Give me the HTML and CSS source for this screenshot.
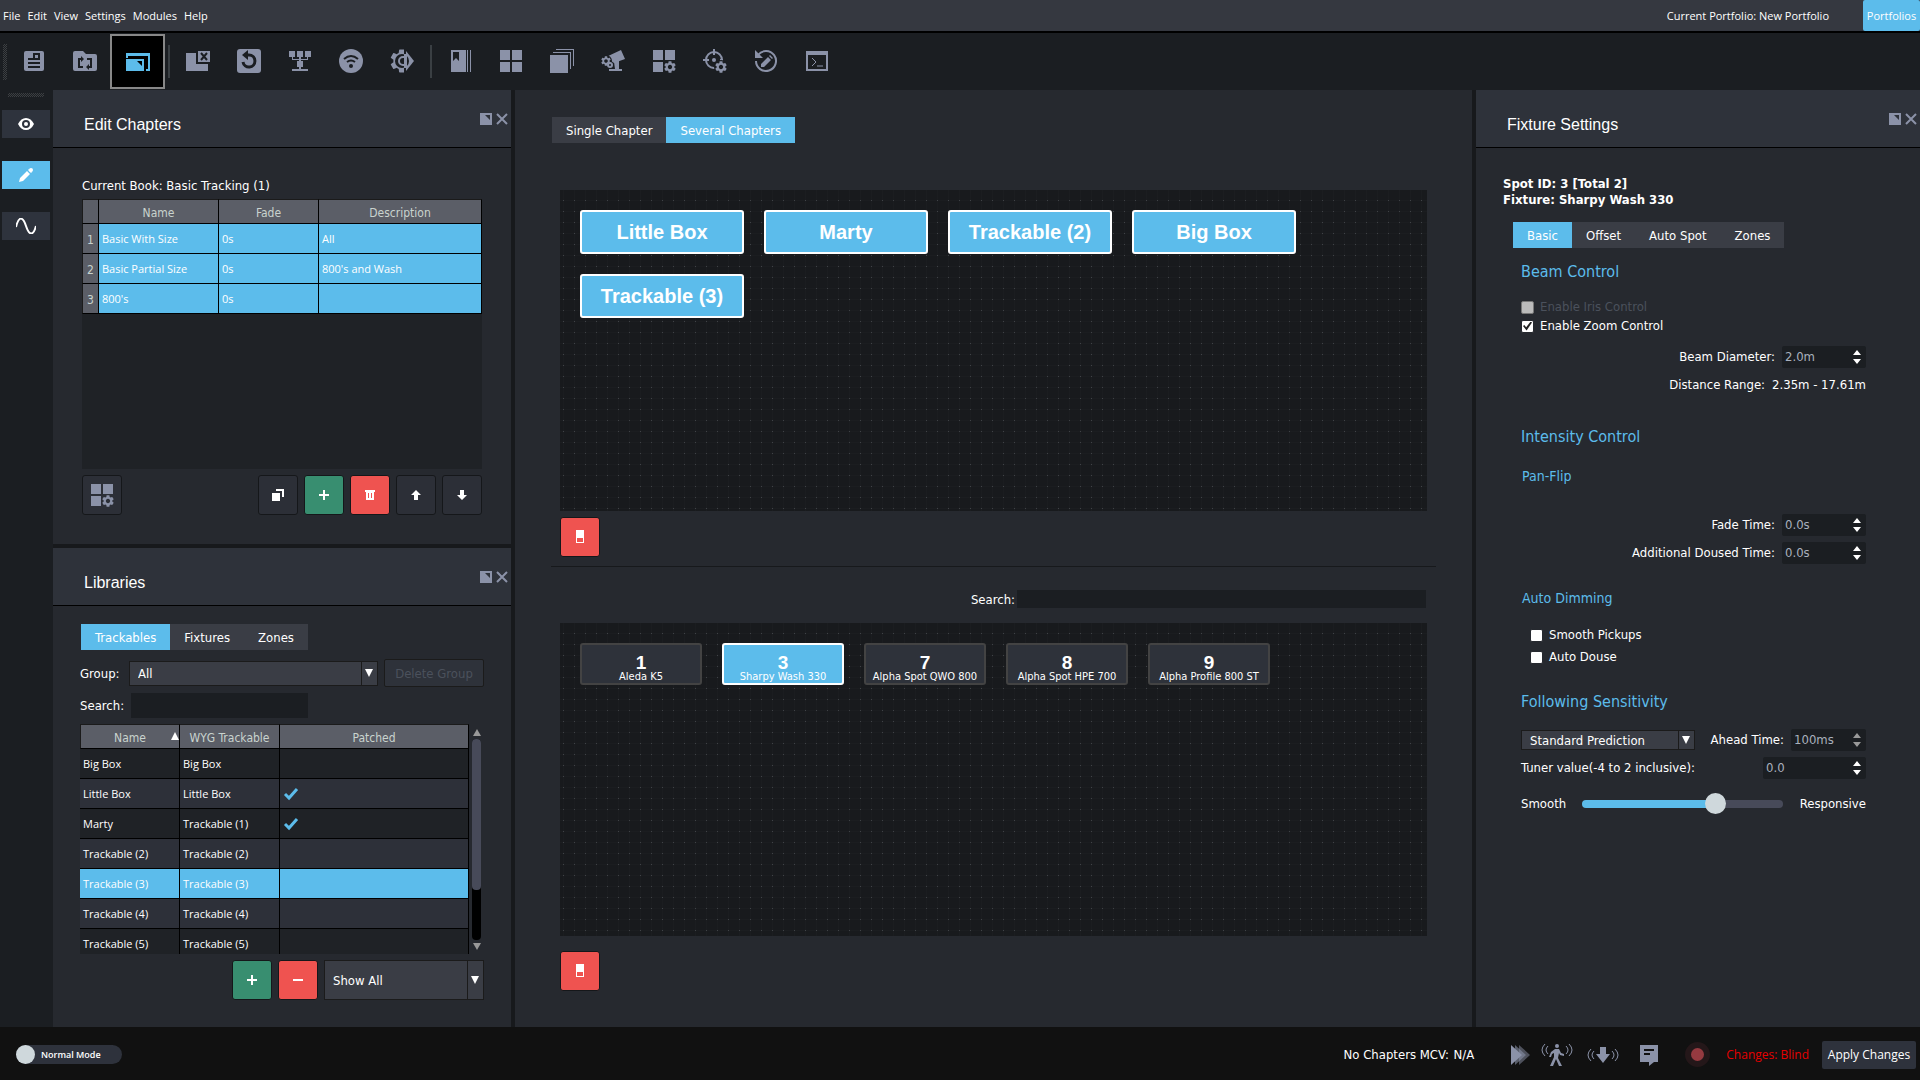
FILE: index.html
```html
<!DOCTYPE html>
<html lang="en">
<head>
    <meta charset="UTF-8">
    <meta name="viewport" content="width=device-width, initial-scale=1.0">
    <title>New Portfolio - Edit Chapters</title>
    <link rel="stylesheet" href="styles.css">
</head>
<body>
    <!-- Shared icons -->
    <svg class="sprite" aria-hidden="true">
        <symbol id="gear" viewBox="2 2 20 20">
            <path d="M19.14 12.94c.04-.3.06-.61.06-.94 0-.32-.02-.64-.07-.94l2.03-1.58c.18-.14.23-.41.12-.61l-1.92-3.32c-.12-.22-.37-.29-.59-.22l-2.39.96c-.5-.38-1.03-.7-1.62-.94l-.36-2.54c-.04-.24-.24-.41-.48-.41h-3.84c-.24 0-.43.17-.47.41l-.36 2.54c-.59.24-1.13.57-1.62.94l-2.39-.96c-.22-.08-.47 0-.59.22L2.74 8.87c-.12.21-.08.47.12.61l2.03 1.58c-.05.3-.09.63-.09.94s.02.64.07.94l-2.03 1.58c-.18.14-.23.41-.12.61l1.92 3.32c.12.22.37.29.59.22l2.39-.96c.5.38 1.03.7 1.62.94l.36 2.54c.05.24.24.41.48.41h3.84c.24 0 .44-.17.47-.41l.36-2.54c.59-.24 1.13-.56 1.62-.94l2.39.96c.22.08.47 0 .59-.22l1.92-3.32c.12-.22.07-.47-.12-.61l-2.01-1.58zM12 15.6c-1.98 0-3.6-1.62-3.6-3.6s1.62-3.6 3.6-3.6 3.6 1.62 3.6 3.6-1.62 3.6-3.6 3.6z"/>
        </symbol>
        <symbol id="grid-gear" viewBox="0 0 24 24">
            <path d="M1 1h10v10H1zM13 1h10v10H13zM1 13h10v10H1z"/>
            <use href="#gear" x="12" y="12" width="12" height="12"/>
        </symbol>
        <symbol id="dock" viewBox="0 0 12 12">
            <path fill-rule="evenodd" d="M0 0h12v12H0zM5 2h5v5z"/>
        </symbol>
        <symbol id="close" viewBox="0 0 12 12">
            <path d="M1 1l10 10M11 1L1 11" fill="none" stroke="currentColor" stroke-width="2"/>
        </symbol>
        <symbol id="plus" viewBox="0 0 12 12">
            <path d="M5 1h2v4h4v2H7v4H5V7H1V5h4z"/>
        </symbol>
        <symbol id="check" viewBox="0 0 16 14">
            <path d="M2 7l4 4 8-9" fill="none" stroke="currentColor" stroke-width="3"/>
        </symbol>
        <symbol id="eraser" viewBox="0 0 10 14">
            <path fill-rule="evenodd" d="M1 0h8v13H1zM2 8h6v4H2z"/>
        </symbol>
        <symbol id="spin" viewBox="0 0 8 16">
            <path d="M0 6l4-5 4 5zM0 10h8l-4 5z"/>
        </symbol>
    </svg>

    <header class="menubar">
        <nav class="menu">
            <a href="#">File</a>
            <a href="#">Edit</a>
            <a href="#">View</a>
            <a href="#">Settings</a>
            <a href="#">Modules</a>
            <a href="#">Help</a>
        </nav>
        <span class="current-portfolio">Current Portfolio: New Portfolio</span>
        <button class="portfolios-btn">Portfolios</button>
    </header>

    <div class="toolbar">
        <span class="grip grip-v"></span>
        <button class="tool" aria-label="Portfolio">
            <svg viewBox="0 0 24 24"><rect x="2" y="2" width="20" height="20" rx="2"/><path class="cut" d="M11 4h7v7h-7zM6 9h5v2H6zM6 13h12v2H6zM6 17h12v2H6z"/><path d="M13 6h3v3h-3z"/></svg>
        </button>
        <button class="tool" aria-label="Reload folder">
            <svg viewBox="0 0 24 24"><path d="M2 2h8l3 3h9a2 2 0 0 1 2 2v13a2 2 0 0 1-2 2H2a2 2 0 0 1-2-2V4a2 2 0 0 1 2-2z"/><path class="cut-line" d="M10 18H6v-8h3M14 10h4v8h-3"/><path class="cut" d="M8 7l3 3-3 3zM16 15l-3 3 3 3z"/></svg>
        </button>
        <button class="tool active" aria-label="Windows">
            <svg viewBox="0 0 24 24"><path d="M0 4h24v18h-4v-2h2V7H2v2H0z"/><path fill-rule="evenodd" d="M0 10h18v12H0zM11 12h5v5z"/></svg>
        </button>
        <span class="divider"></span>
        <button class="tool" aria-label="Close windows">
            <svg viewBox="0 0 24 24"><path d="M0 4h10v11h12v7H0zM12 2h12v11H12z"/><path class="cut-line" d="M15 4l6 7M21 4l-6 7"/></svg>
        </button>
        <button class="tool" aria-label="Reset">
            <svg viewBox="0 0 24 24"><rect width="24" height="24" rx="3"/><path class="cut-line thick" d="M9 6h3a6 6 0 1 1-6 7"/><path class="cut" d="M5 6l6-5v10z"/></svg>
        </button>
        <button class="tool" aria-label="Network">
            <svg viewBox="0 0 24 24"><path d="M1 2h6v6H1zM9 2h6v6H9zM17 2h6v6h-6zM9 12h6v6H9zM11 8h2v13h-2zM4 8h1v2h14V8h1v3H4zM4 20h16v2H4z"/></svg>
        </button>
        <button class="tool" aria-label="Wireless">
            <svg viewBox="0 0 24 24"><circle cx="12" cy="12" r="12"/><path class="cut-line" d="M5 10q7-6 14 0M8 13q4-3 8 0"/><circle class="cut" cx="12" cy="17" r="2"/></svg>
        </button>
        <button class="tool" aria-label="Run setup">
            <svg viewBox="0 0 24 24"><use href="#gear" width="24" height="24"/><path class="cut" d="M14 0h10v24H14z"/><path d="M16 2l8 10-8 10z"/><circle class="cut" cx="12" cy="12" r="7"/><path d="M14 5h3v14h-3z"/><path class="line" d="M15 8h-2a4 4 0 0 0 0 8h2"/></svg>
        </button>
        <span class="divider"></span>
        <button class="tool" aria-label="Book">
            <svg viewBox="0 0 24 24"><path fill-rule="evenodd" d="M3 1h15v22H3zM5 3v9l3-3 3 3V3z"/><path d="M19 1h1v22h-1zM22 1h1v22h-1z"/></svg>
        </button>
        <button class="tool" aria-label="Library">
            <svg viewBox="0 0 24 24"><path d="M1 1h10v10H1zM13 1h10v10H13zM1 13h10v10H1zM13 13h10v10H13z"/></svg>
        </button>
        <button class="tool" aria-label="Layers">
            <svg viewBox="0 0 24 24"><path d="M0 6h18v18H0zM3 3h18v17h-1V4H3zM6 0h18v17h-1V1H6z"/></svg>
        </button>
        <button class="tool" aria-label="Fixtures">
            <svg viewBox="0 0 24 24"><path d="M5 8L20 1l4 9-11 4zM13 13l5-2v9h3v2H8v-2h6z"/><circle class="cut" cx="5" cy="12" r="6"/><use href="#gear" x="0" y="7" width="10" height="10"/><circle cx="9" cy="16" r="3"/><circle class="cut" cx="9" cy="16" r="1"/></svg>
        </button>
        <button class="tool" aria-label="Library settings">
            <svg><use href="#grid-gear"/></svg>
        </button>
        <button class="tool" aria-label="Calibration">
            <svg viewBox="0 0 24 24"><circle class="line" cx="11" cy="11" r="8"/><path class="line" d="M11 0v6M0 11h6M17 11h3"/><circle cx="11" cy="11" r="2"/><circle class="cut" cx="18" cy="18" r="7"/><use href="#gear" x="12" y="12" width="12" height="12"/></svg>
        </button>
        <button class="tool" aria-label="Edit history">
            <svg viewBox="0 0 24 24"><path class="line" d="M4 6a10 10 0 1 1-2 6"/><path d="M1 1v8h8zM7 15l7-7 3 3-7 7H7zM15 7l1-1 3 3-1 1z"/></svg>
        </button>
        <button class="tool" aria-label="Console">
            <svg viewBox="0 0 24 24"><path fill-rule="evenodd" d="M1 2h22v20H1zM3 6v14h18V6z"/><path class="thin" d="M7 9l4 4-4 4M12 17h6"/></svg>
        </button>
    </div>

    <main class="workspace">
        <aside class="sidebar">
            <span class="grip grip-h"></span>
            <button class="side-btn" aria-label="View">
                <svg viewBox="0 0 16 16"><path fill-rule="evenodd" d="M0 8q3-6 8-6t8 6q-3 6-8 6T0 8zM8 4a4 4 0 1 0 0 8 4 4 0 0 0 0-8z"/><circle cx="8" cy="8" r="2"/></svg>
            </button>
            <button class="side-btn active" aria-label="Edit">
                <svg viewBox="0 0 16 16"><path d="M1 15l1-4 7-7 3 3-7 7zM10 3l1-1 3 3-1 1z"/><circle cx="13" cy="3" r="2"/></svg>
            </button>
            <button class="side-btn" aria-label="Curves">
                <svg viewBox="0 0 20 16"><path d="M0 9C3-3 7-1 10 8s7 11 10 0" fill="none" stroke="currentColor" stroke-width="2"/></svg>
            </button>
        </aside>

        <div class="left-column">
            <section class="panel chapters">
                <div class="panel-header">
                    <h2>Edit Chapters</h2>
                    <button class="panel-btn" aria-label="Undock"><svg><use href="#dock"/></svg></button>
                    <button class="panel-btn" aria-label="Close"><svg><use href="#close"/></svg></button>
                </div>
                <div class="chapters-body">
                    <p class="book-label">Current Book: Basic Tracking (1)</p>
                    <div class="table-area">
                        <table class="grid-table chapters-table">
                            <colgroup><col class="col-num"><col class="col-name"><col class="col-fade"><col></colgroup>
                            <thead>
                                <tr><th></th><th>Name</th><th>Fade</th><th>Description</th></tr>
                            </thead>
                            <tbody>
                                <tr class="selected"><th>1</th><td>Basic With Size</td><td>0s</td><td>All</td></tr>
                                <tr class="selected"><th>2</th><td>Basic Partial Size</td><td>0s</td><td>800's and Wash</td></tr>
                                <tr class="selected"><th>3</th><td>800's</td><td>0s</td><td></td></tr>
                            </tbody>
                        </table>
                    </div>
                    <div class="actions">
                        <button class="btn-square grey push" aria-label="Chapter settings"><svg class="icon-lg"><use href="#grid-gear"/></svg></button>
                        <button class="btn-square" aria-label="Duplicate"><svg viewBox="0 0 12 12"><path d="M0 4h8v8H0zM4 0h8v8h-2V2H4z"/></svg></button>
                        <button class="btn-square green" aria-label="Add"><svg><use href="#plus"/></svg></button>
                        <button class="btn-square red" aria-label="Delete"><svg viewBox="0 0 12 12"><path fill-rule="evenodd" d="M1 1h10v2h-1v8H2V3H1zM4 4v5h1V4zM7 4v5h1V4z"/></svg></button>
                        <button class="btn-square" aria-label="Move up"><svg viewBox="0 0 12 12"><path d="M6 1l5 5H8v5H4V6H1z"/></svg></button>
                        <button class="btn-square" aria-label="Move down"><svg viewBox="0 0 12 12"><path d="M6 11l5-5H8V1H4v5H1z"/></svg></button>
                    </div>
                </div>
            </section>

            <section class="panel libraries">
                <div class="panel-header">
                    <h2>Libraries</h2>
                    <button class="panel-btn" aria-label="Undock"><svg><use href="#dock"/></svg></button>
                    <button class="panel-btn" aria-label="Close"><svg><use href="#close"/></svg></button>
                </div>
                <div class="libraries-body">
                    <div class="tabs">
                        <button class="tab active">Trackables</button>
                        <button class="tab">Fixtures</button>
                        <button class="tab">Zones</button>
                    </div>
                    <div class="group-row">
                        <label for="group">Group:</label>
                        <span class="select"><select id="group"><option>All</option></select></span>
                        <button class="delete-group" disabled>Delete Group</button>
                    </div>
                    <div class="search-row">
                        <label for="library-search">Search:</label>
                        <input type="text" id="library-search">
                    </div>
                    <div class="table-scroll">
                        <div class="table-view">
                            <table class="grid-table library-table">
                                <colgroup><col class="col-lib"><col class="col-lib"><col></colgroup>
                                <thead>
                                    <tr><th class="sorted">Name</th><th>WYG Trackable</th><th>Patched</th></tr>
                                </thead>
                                <tbody>
                                    <tr><td>Big Box</td><td>Big Box</td><td></td></tr>
                                    <tr><td>Little Box</td><td>Little Box</td><td><svg class="check"><use href="#check"/></svg></td></tr>
                                    <tr><td>Marty</td><td>Trackable (1)</td><td><svg class="check"><use href="#check"/></svg></td></tr>
                                    <tr><td>Trackable (2)</td><td>Trackable (2)</td><td></td></tr>
                                    <tr class="selected"><td>Trackable (3)</td><td>Trackable (3)</td><td></td></tr>
                                    <tr><td>Trackable (4)</td><td>Trackable (4)</td><td></td></tr>
                                    <tr><td>Trackable (5)</td><td>Trackable (5)</td><td></td></tr>
                                </tbody>
                            </table>
                        </div>
                        <div class="scrollbar">
                            <span class="arrow-up"></span>
                            <div class="scroll-track"><div class="scroll-thumb"></div></div>
                            <span class="arrow-down"></span>
                        </div>
                    </div>
                    <div class="library-actions">
                        <button class="btn-square green" aria-label="Add trackable"><svg><use href="#plus"/></svg></button>
                        <button class="btn-square red" aria-label="Remove trackable"><svg viewBox="0 0 12 12"><path d="M1 5h10v2H1z"/></svg></button>
                        <span class="select tall"><select aria-label="Filter"><option>Show All</option></select></span>
                    </div>
                </div>
            </section>
        </div>

        <section class="stage">
            <div class="tabs">
                <button class="tab">Single Chapter</button>
                <button class="tab active">Several Chapters</button>
            </div>
            <div class="canvas trackable-canvas">
                <button class="trackable">Little Box</button>
                <button class="trackable">Marty</button>
                <button class="trackable">Trackable (2)</button>
                <button class="trackable">Big Box</button>
                <button class="trackable">Trackable (3)</button>
            </div>
            <div class="stage-actions">
                <button class="btn-square red" aria-label="Clear trackables"><svg class="icon-eraser"><use href="#eraser"/></svg></button>
            </div>
            <hr>
            <div class="stage-search">
                <label for="fixture-search">Search:</label>
                <input type="text" id="fixture-search">
            </div>
            <div class="canvas fixture-canvas">
                <button class="fixture"><b>1</b>Aleda K5</button>
                <button class="fixture active"><b>3</b>Sharpy Wash 330</button>
                <button class="fixture"><b>7</b>Alpha Spot QWO 800</button>
                <button class="fixture"><b>8</b>Alpha Spot HPE 700</button>
                <button class="fixture"><b>9</b>Alpha Profile 800 ST</button>
            </div>
            <div class="stage-actions last">
                <button class="btn-square red" aria-label="Clear fixtures"><svg class="icon-eraser"><use href="#eraser"/></svg></button>
            </div>
        </section>

        <section class="panel settings">
            <div class="panel-header">
                <h2>Fixture Settings</h2>
                <button class="panel-btn" aria-label="Undock"><svg><use href="#dock"/></svg></button>
                <button class="panel-btn" aria-label="Close"><svg><use href="#close"/></svg></button>
            </div>
            <div class="settings-body">
                <p class="spot-info">Spot ID: 3 [Total 2]<br>Fixture: Sharpy Wash 330</p>
                <div class="tabs">
                    <button class="tab active">Basic</button>
                    <button class="tab">Offset</button>
                    <button class="tab">Auto Spot</button>
                    <button class="tab">Zones</button>
                </div>
                <div class="settings-form">
                    <h3>Beam Control</h3>
                    <div class="checks">
                        <label class="check-row disabled"><input type="checkbox" disabled> Enable Iris Control</label>
                        <label class="check-row"><input type="checkbox" checked> Enable Zoom Control</label>
                    </div>
                    <div class="field">
                        <label for="beam">Beam Diameter:</label>
                        <span class="spin"><input type="text" id="beam" value="2.0m"><svg><use href="#spin"/></svg></span>
                    </div>
                    <div class="field"><span>Distance Range:</span> <span>2.35m - 17.61m</span></div>

                    <h3 class="intensity">Intensity Control</h3>
                    <h4>Pan-Flip</h4>
                    <div class="field">
                        <label for="fade">Fade Time:</label>
                        <span class="spin"><input type="text" id="fade" value="0.0s"><svg><use href="#spin"/></svg></span>
                    </div>
                    <div class="field">
                        <label for="doused">Additional Doused Time:</label>
                        <span class="spin"><input type="text" id="doused" value="0.0s"><svg><use href="#spin"/></svg></span>
                    </div>

                    <h4 class="dimming">Auto Dimming</h4>
                    <div class="checks indent">
                        <label class="check-row"><input type="checkbox"> Smooth Pickups</label>
                        <label class="check-row"><input type="checkbox"> Auto Douse</label>
                    </div>

                    <h3 class="following">Following Sensitivity</h3>
                    <div class="field spread">
                        <span class="select small"><select aria-label="Prediction"><option>Standard Prediction</option></select></span>
                        <label for="ahead" class="ahead-label">Ahead Time:</label>
                        <span class="spin narrow disabled"><input type="text" id="ahead" value="100ms" disabled><svg><use href="#spin"/></svg></span>
                    </div>
                    <div class="field spread">
                        <label for="tuner">Tuner value(-4 to 2 inclusive):</label>
                        <span class="spin wide"><input type="text" id="tuner" value="0.0"><svg><use href="#spin"/></svg></span>
                    </div>
                    <div class="slider-row">
                        <label for="smooth">Smooth</label>
                        <input type="range" id="smooth" min="0" max="100" value="68">
                        <span>Responsive</span>
                    </div>
                </div>
            </div>
        </section>
    </main>

    <footer class="statusbar">
        <button class="mode-toggle"><span class="knob"></span>Normal Mode</button>
        <span class="mcv">No Chapters MCV: <span class="mcv-value">N/A</span></span>
        <div class="status-icons">
            <svg class="play" viewBox="0 0 24 24"><path d="M13 2l11 10-11 10z" opacity=".5"/><path d="M9 2l11 10L9 22z" opacity=".6"/><path d="M5 2l11 10L5 22z"/></svg>
            <svg viewBox="-3 0 38 24"><circle cx="16" cy="3" r="2"/><path d="M14 6h4l2 4 3 1v2l-4-1-1-2-1 5 4 8h-3l-3-7-3 7h-3l4-9V10l-2 1-1 3H8l2-5z"/><path class="thin" d="M4 1q-6 6 0 12M7 3q-4 4 0 8M28 1q6 6 0 12M25 3q4 4 0 8"/></svg>
            <svg viewBox="-3 0 38 24"><path d="M13 4h6v7h4l-7 9-7-9h4z"/><path class="thin" d="M4 6q-6 6 0 12M7 8q-4 4 0 8M28 6q6 6 0 12M25 8q4 4 0 8"/></svg>
            <svg viewBox="-3 0 38 24"><path fill-rule="evenodd" d="M7 2h18v17h-4l-5 4v-4H7zM11 6v2h10V6zM11 10v2h6v-2z"/></svg>
        </div>
        <span class="record"></span>
        <span class="changes">Changes: Blind</span>
        <button class="apply">Apply Changes</button>
    </footer>
</body>
</html>
```
FILE: styles.css
```css
* {
    box-sizing: border-box;
}
body {
    margin: 0;
    min-height: 100vh;
    display: flex;
    flex-direction: column;
    background-color: #1b1e22;
    color: #fff;
    font-family: "DejaVu Sans Condensed", "DejaVu Sans", sans-serif;
    font-size: 13px;
    line-height: 16px;
}
button, input, select {
    font: inherit;
    color: inherit;
    border: none;
    border-radius: 0;
    padding: 0;
    margin: 0;
}
button {
    background: none;
    cursor: pointer;
}
svg {
    display: block;
    fill: currentColor;
}
h2, h3, h4, p {
    margin: 0;
    font-weight: normal;
}
.sprite {
    position: absolute;
    width: 0;
    height: 0;
}

/* Menu bar */
.menubar {
    display: flex;
    height: 33px;
    background-color: #353840;
    border-bottom: 2px solid #000;
    font-family: "Open Sans", sans-serif;
    font-size: 11px;
}
.menu {
    display: flex;
    flex: 1;
    align-items: center;
    gap: 7px;
    padding-left: 3px;
}
.menu a {
    color: #fff;
    text-decoration: none;
}
.current-portfolio {
    align-self: center;
    margin-right: 34px;
}
.portfolios-btn {
    width: 57px;
    background-color: #5cbceb;
    border-radius: 2px;
}

/* Toolbar */
.toolbar {
    display: flex;
    align-items: center;
    height: 57px;
    padding-left: 3px;
    color: #8b92a8;
}
.toolbar .tool {
    margin-bottom: 1px;
}
.grip {
    display: block;
    background-image: conic-gradient(#3c3f42 25%, transparent 0 50%, #3c3f42 0 75%, transparent 0);
    background-size: 2px 2px;
}
.grip-v {
    width: 4px;
    height: 36px;
    margin-right: 1px;
}
.grip-h {
    width: 36px;
    height: 4px;
    margin: 3px 0 13px 6px;
}
.tool {
    display: flex;
    align-items: center;
    justify-content: center;
    width: 51px;
    height: 55px;
}
.tool.active {
    width: 55px;
    background-color: #000;
    border: 2px solid #888;
    color: #5cbceb;
}
.tool svg {
    width: 24px;
    height: 24px;
}
.divider {
    width: 2px;
    height: 33px;
    margin: 0 2px 0 3px;
    background-color: #3a3f43;
}
.cut {
    fill: #1b1e22;
}
.cut-line {
    fill: none;
    stroke: #1b1e22;
    stroke-width: 2;
}
.thick {
    stroke-width: 3;
}
.line {
    fill: none;
    stroke: currentColor;
    stroke-width: 2;
}
.thin {
    fill: none;
    stroke: currentColor;
    stroke-width: 1;
}

/* Workspace */
.workspace {
    flex: 1;
    display: grid;
    grid-template-columns: 53px 458px minmax(0, 1fr) 444px;
}
.sidebar {
    padding: 0 2px;
}
.side-btn {
    display: flex;
    align-items: center;
    justify-content: center;
    width: 48px;
    height: 28px;
    margin-bottom: 23px;
    background-color: #2e333d;
}
.side-btn.active {
    background-color: #5cbceb;
}
.side-btn svg {
    width: 20px;
    height: 16px;
}
.left-column {
    display: flex;
    flex-direction: column;
    gap: 4px;
    background-color: #17191c;
}
.panel {
    display: flex;
    flex-direction: column;
    background-color: #26292f;
}
.panel-header {
    display: flex;
    align-items: flex-start;
    gap: 4px;
    height: 58px;
    padding: 23px 3px 0 31px;
    background-color: #2e323a;
    border-bottom: 1px solid #000;
}
.panel-header h2 {
    flex: 1;
    font-family: "Liberation Sans", Arial, sans-serif;
    font-size: 16px;
    line-height: 24px;
}
.panel-btn {
    color: #8b92a8;
}
.panel-btn svg {
    width: 12px;
    height: 12px;
}

/* Tabs */
.tabs {
    display: flex;
}
.tab {
    height: 26px;
    padding: 1px 14px 0;
    background-color: #3a3d45;
}
.tab.active {
    background-color: #5cbceb;
}

/* Tables */
.grid-table {
    width: 100%;
    table-layout: fixed;
    border-collapse: separate;
    border-spacing: 0;
}
.grid-table th, .grid-table td {
    height: 30px;
    padding: 0 3px;
    border-right: 1px solid #000;
    border-bottom: 1px solid #000;
}
.grid-table th {
    padding: 2px 0 0;
    background-color: #5b5e67;
    color: #c9d3ce;
    font-size: 12px;
    font-weight: normal;
}
.grid-table thead th {
    height: 25px;
    border-top: 1px solid #1b1b1b;
}
.grid-table th:first-child {
    border-left: 1px solid #1b1b1b;
}
.grid-table td {
    font-family: "Open Sans", sans-serif;
    font-size: 11px;
}
.grid-table .selected td {
    background-color: #5cbceb;
}
.col-num {
    width: 17px;
}
.col-name {
    width: 120px;
}
.col-fade, .col-lib {
    width: 100px;
}

/* Edit Chapters */
.chapters {
    flex: 454 1 454px;
}
.chapters-body {
    flex: 1;
    display: flex;
    flex-direction: column;
    padding: 30px 29px 29px;
}
.book-label {
    margin-bottom: 5px;
}
.table-area {
    flex: 1;
    background-color: #1f2226;
}
.actions {
    display: flex;
    gap: 6px;
    margin-top: 6px;
}
.push {
    margin-right: auto;
}
.btn-square {
    display: flex;
    align-items: center;
    justify-content: center;
    width: 40px;
    height: 40px;
    background-color: #2c2f37;
    border: 1px solid #15171a;
    border-radius: 3px;
}
.btn-square svg {
    width: 12px;
    height: 12px;
}
.btn-square .icon-lg {
    width: 24px;
    height: 24px;
}
.btn-square .icon-eraser {
    width: 10px;
    height: 14px;
}
.btn-square.grey {
    color: #8b92a8;
}
.btn-square.green {
    background-color: #388e70;
}
.btn-square.red {
    background-color: #ef5350;
}

/* Libraries */
.libraries {
    flex: 479 1 479px;
}
.libraries-body {
    flex: 1;
    display: flex;
    flex-direction: column;
    padding: 18px 27px 27px;
}
.libraries-body .tabs {
    margin-left: 1px;
}
.group-row, .search-row {
    display: flex;
    align-items: center;
}
.group-row {
    margin-top: 9px;
}
.search-row {
    margin-top: 6px;
    margin-bottom: 6px;
}
.group-row label, .search-row label {
    width: 49px;
    padding-top: 1px;
    white-space: nowrap;
}
.search-row label {
    width: 51px;
}
.search-row input {
    width: 177px;
    height: 25px;
    padding: 0 4px;
    background-color: #1b1e22;
}
.select {
    position: relative;
    width: 249px;
    height: 25px;
    background-color: #3a3d45;
    border: 1px solid #1b1b1b;
}
.select select {
    width: 100%;
    height: 100%;
    padding: 1px 0 0 8px;
    background: none;
    appearance: none;
}
.select::after {
    content: "";
    position: absolute;
    right: 4px;
    top: calc(50% - 4px);
    border: 4px solid transparent;
    border-top: 8px solid #fff;
    border-bottom: none;
    pointer-events: none;
}
.select::before {
    content: "";
    position: absolute;
    right: 15px;
    top: 0;
    bottom: 0;
    width: 1px;
    background-color: #1b1b1b;
}
.select.tall {
    width: 160px;
    height: 40px;
}
.select.small {
    width: 174px;
    height: 20px;
}
.delete-group {
    flex: 1;
    height: 28px;
    margin-left: 6px;
    padding-top: 1px;
    background-color: #2e323a;
    border: 1px solid #1b1b1b;
    border-radius: 2px;
    color: #4b515c;
}
.table-scroll {
    flex: 1;
    display: flex;
    min-height: 230px;
}
.table-view {
    flex: 1;
    height: 230px;
    overflow: hidden;
}
.library-table tbody tr {
    background-color: #1f2226;
}
.library-table tbody tr:nth-child(even) {
    background-color: #2d3039;
}
.library-table .sorted {
    position: relative;
}
.sorted::after {
    content: "";
    position: absolute;
    right: 0;
    top: 7px;
    border: 4px solid transparent;
    border-bottom: 8px solid #fff;
    border-top: none;
}
.check {
    width: 16px;
    height: 14px;
    color: #5cbceb;
}
.scrollbar {
    display: flex;
    flex-direction: column;
    align-items: center;
    width: 15px;
    padding: 5px 0 4px;
}
.arrow-up, .arrow-down {
    border: 4px solid transparent;
}
.arrow-up {
    border-bottom: 7px solid #999;
    border-top: none;
}
.arrow-down {
    border-top: 7px solid #999;
    border-bottom: none;
}
.scroll-track {
    flex: 1;
    width: 9px;
    margin: 3px 0;
    background-color: #000;
    border-radius: 4px;
}
.scroll-thumb {
    height: 75%;
    background-color: #474a59;
    border-radius: 4px;
}
.library-actions {
    display: flex;
    justify-content: flex-end;
    gap: 6px;
    margin-top: 6px;
}

/* Stage */
.stage {
    display: flex;
    flex-direction: column;
    padding: 27px 36px 36px;
    background-color: #26292f;
    border: solid #17191c;
    border-width: 0 4px;
}
.stage .tabs {
    margin-left: 1px;
}
.canvas {
    display: flex;
    flex-wrap: wrap;
    align-content: flex-start;
    gap: 20px;
    margin: 0 9px;
    padding: 20px;
    background-color: #181a1d;
    background-image:
        conic-gradient(from 0deg at 1px 1px, transparent 270deg, #404347 0),
        linear-gradient(#1b1d20 1px, transparent 1px),
        linear-gradient(90deg, #1b1d20 1px, transparent 1px);
    background-size: 11px 11px;
    background-position: 3px 10px;
}
.trackable-canvas {
    flex: 1 0 321px;
    margin-top: 47px;
}
.fixture-canvas {
    flex: 1 0 313px;
}
.trackable {
    width: 164px;
    height: 44px;
    background-color: #5cbceb;
    border: 2px solid #fff;
    border-radius: 3px;
    font-family: "Liberation Sans", Arial, sans-serif;
    font-size: 20px;
    font-weight: bold;
}
.fixture {
    display: flex;
    flex-direction: column;
    align-items: center;
    justify-content: flex-end;
    width: 122px;
    height: 42px;
    background-color: #2e323a;
    border: 2px solid #434343;
    border-radius: 3px;
    font-size: 11px;
    line-height: 12px;
    white-space: nowrap;
}
.fixture b {
    font-family: "Liberation Sans", Arial, sans-serif;
    font-size: 19px;
    line-height: 16px;
}
.fixture.active {
    background-color: #5cbceb;
    border-color: #fff;
}
.stage-actions {
    margin: 6px 9px 9px;
}
.stage-actions.last {
    margin: 15px 9px 0;
}
.stage hr {
    width: 100%;
    height: 1px;
    margin: 0;
    border: none;
    background-color: #17191c;
}
.stage-search {
    display: flex;
    align-items: center;
    justify-content: flex-end;
    gap: 2px;
    margin: 23px 10px 15px;
}
.stage-search label {
    padding-top: 2px;
}
.stage-search input {
    width: 409px;
    height: 18px;
    padding: 0 4px;
    background-color: #1b1e22;
}

/* Fixture Settings */
.settings-body {
    padding: 28px 54px 27px 27px;
}
.spot-info {
    margin-bottom: 14px;
    font-weight: bold;
}
.settings-body .tabs {
    margin-left: 10px;
}
.settings-form {
    padding-left: 18px;
}
h3, h4 {
    color: #5cbceb;
}
h3 {
    font-size: 16px;
    line-height: 20px;
    margin-top: 14px;
}
h4 {
    padding-left: 1px;
    font-size: 14px;
    line-height: 18px;
    margin-top: 20px;
    margin-bottom: 29px;
}
.checks {
    display: flex;
    flex-direction: column;
    gap: 3px;
    margin-top: 17px;
    margin-bottom: 12px;
}
.checks.indent {
    gap: 6px;
    margin-left: 9px;
    margin-bottom: 27px;
}
.check-row {
    display: flex;
    align-items: center;
    gap: 6px;
}
.check-row.disabled {
    color: #4b515c;
}
.check-row input {
    display: grid;
    place-items: center;
    width: 13px;
    height: 13px;
    appearance: none;
    background-color: #fff;
    border: 1px solid #26292f;
    border-radius: 2px;
}
.check-row input:checked::before {
    content: "";
    width: 9px;
    height: 9px;
    background-color: #222;
    clip-path: polygon(0 50%, 15% 40%, 35% 65%, 85% 0, 100% 10%, 40% 100%);
}
.check-row input:disabled {
    background-color: #bbb;
    border: 1px solid #777;
}
.field {
    display: flex;
    align-items: center;
    justify-content: flex-end;
    gap: 7px;
    min-height: 22px;
    margin-bottom: 6px;
}
.field.spread {
    justify-content: space-between;
}
.intensity {
    margin-top: 31px;
}
h4.dimming {
    margin-top: 25px;
    margin-bottom: 0;
}
.dimming + .checks {
    margin-top: 20px;
}
.following {
    margin-top: 0;
    margin-bottom: 17px;
}
.spin {
    display: flex;
    align-items: center;
    width: 84px;
    height: 22px;
    padding: 0 5px 0 3px;
    background-color: #1b1e22;
    border-radius: 2px;
}
.spin input {
    flex: 1;
    min-width: 0;
    background: none;
    color: #a9b0bd;
}
.spin svg {
    width: 8px;
    height: 16px;
}
.spin.narrow {
    width: 75px;
}
.spin.wide {
    width: 103px;
}
.spin.disabled svg {
    color: #999;
}
.ahead-label {
    margin-left: auto;
}
.slider-row {
    display: flex;
    align-items: center;
    justify-content: space-between;
    margin-top: 14px;
}
.slider-row input {
    width: 201px;
    height: 21px;
    appearance: none;
    background: none;
}
.slider-row input::-webkit-slider-runnable-track {
    height: 8px;
    border-radius: 4px;
    background: linear-gradient(90deg, #5cbceb 66%, #474a59 0);
}
.slider-row input::-webkit-slider-thumb {
    appearance: none;
    width: 21px;
    height: 21px;
    margin-top: -7px;
    border-radius: 50%;
    background-color: #cfd8dc;
}

/* Status bar */
.statusbar {
    display: flex;
    align-items: center;
    height: 53px;
    padding: 2px 4px 0 16px;
    background-color: #111;
    font-family: "Open Sans", sans-serif;
    font-size: 12px;
}
.mode-toggle {
    display: flex;
    align-items: center;
    gap: 6px;
    width: 106px;
    height: 19px;
    margin-right: auto;
    background-color: #2e323c;
    border-radius: 10px;
    font-size: 9px;
    font-weight: 600;
}
.knob {
    width: 19px;
    height: 19px;
    border-radius: 50%;
    background-color: #cfd8dc;
}
.mcv {
    margin-right: 32px;
    font-family: "DejaVu Sans Condensed", sans-serif;
    font-size: 13px;
}
.mcv-value {
    margin-left: 1px;
}
.status-icons {
    display: flex;
    gap: 8px;
    color: #8b92a8;
}
.status-icons svg {
    width: 38px;
    height: 24px;
}
.status-icons .play {
    width: 24px;
}
.record {
    width: 25px;
    height: 25px;
    margin: 0 16px 0 17px;
    border: 6px solid #241719;
    border-radius: 50%;
    background-color: #963a40;
}
.changes {
    margin-right: 13px;
    color: #e60000;
}
.apply {
    width: 94px;
    height: 28px;
    background-color: #2e323c;
    border-radius: 2px;
}
```
